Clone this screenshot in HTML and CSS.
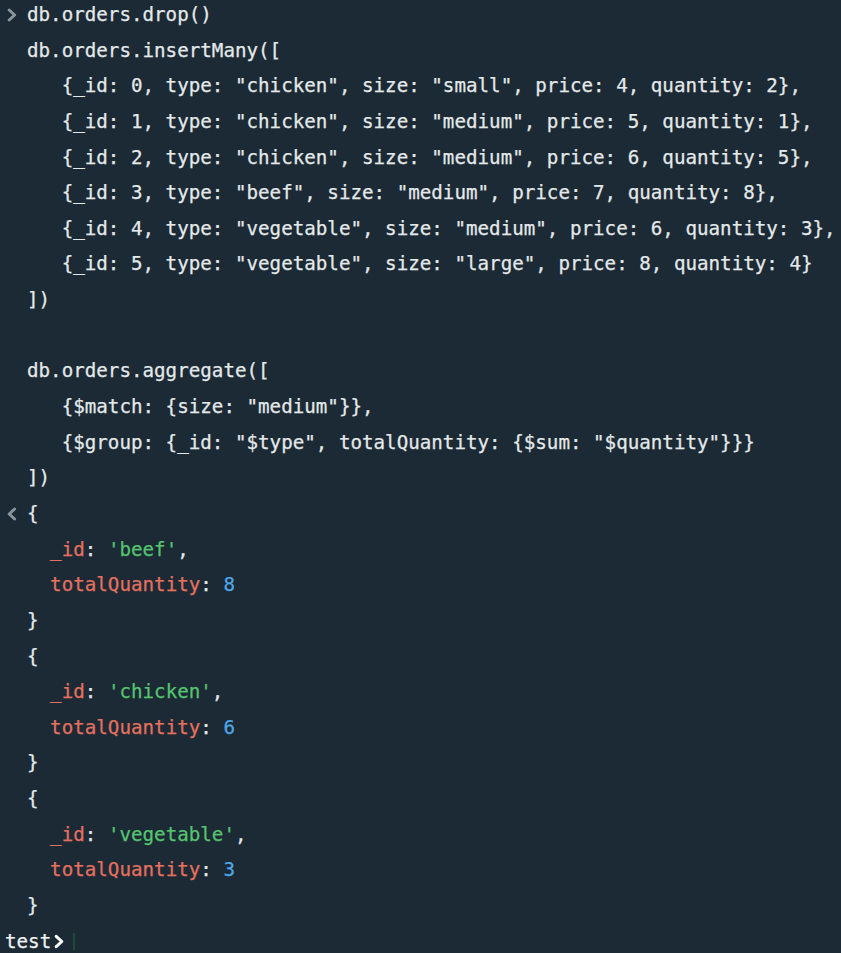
FILE: index.html
```html
<!DOCTYPE html>
<html>
<head>
<meta charset="utf-8">
<link rel="stylesheet" href="styles.css">
</head>
<body>
<div class="shell">
  <div class="entry">
    <span class="gutter"><svg class="chev" viewBox="0 0 10 14" width="10" height="14"><path d="M2.2 2 L7.6 7 L2.2 12" fill="none" stroke="currentColor" stroke-width="3" stroke-linecap="round" stroke-linejoin="round"/></svg></span>
    <div class="code">
      <div class="ln">db.orders.drop()</div>
      <div class="ln">db.orders.insertMany([</div>
      <div class="ln">   {_id: 0, type: "chicken", size: "small", price: 4, quantity: 2},</div>
      <div class="ln">   {_id: 1, type: "chicken", size: "medium", price: 5, quantity: 1},</div>
      <div class="ln">   {_id: 2, type: "chicken", size: "medium", price: 6, quantity: 5},</div>
      <div class="ln">   {_id: 3, type: "beef", size: "medium", price: 7, quantity: 8},</div>
      <div class="ln">   {_id: 4, type: "vegetable", size: "medium", price: 6, quantity: 3},</div>
      <div class="ln">   {_id: 5, type: "vegetable", size: "large", price: 8, quantity: 4}</div>
      <div class="ln">])</div>
      <div class="ln"> </div>
      <div class="ln">db.orders.aggregate([</div>
      <div class="ln">   {$match: {size: "medium"}},</div>
      <div class="ln">   {$group: {_id: "$type", totalQuantity: {$sum: "$quantity"}}}</div>
      <div class="ln">])</div>
    </div>
  </div>
  <div class="entry">
    <span class="gutter"><svg class="chev" viewBox="0 0 10 14" width="10" height="14"><path d="M7.6 2 L2.2 7 L7.6 12" fill="none" stroke="currentColor" stroke-width="3" stroke-linecap="round" stroke-linejoin="round"/></svg></span>
    <div class="code">
      <div class="ln">{</div>
      <div class="ln">  <span class="k">_id</span>: <span class="s">'beef'</span>,</div>
      <div class="ln">  <span class="k">totalQuantity</span>: <span class="n">8</span></div>
      <div class="ln">}</div>
      <div class="ln">{</div>
      <div class="ln">  <span class="k">_id</span>: <span class="s">'chicken'</span>,</div>
      <div class="ln">  <span class="k">totalQuantity</span>: <span class="n">6</span></div>
      <div class="ln">}</div>
      <div class="ln">{</div>
      <div class="ln">  <span class="k">_id</span>: <span class="s">'vegetable'</span>,</div>
      <div class="ln">  <span class="k">totalQuantity</span>: <span class="n">3</span></div>
      <div class="ln">}</div>
    </div>
  </div>
  <div class="prompt">
    <span class="db">test</span><svg class="pchev" viewBox="0 0 12 16" width="12" height="15"><path d="M3 2.5 L9 8 L3 13.5" fill="none" stroke="currentColor" stroke-width="3.2" stroke-linecap="round" stroke-linejoin="round"/></svg><span class="cursor"></span>
  </div>
</div>
</body>
</html>
```

FILE: styles.css
```css
html, body {
  margin: 0;
  padding: 0;
  background: #1c2a35;
  overflow: hidden;
}

.shell {
  margin-top: -3px;
  font-family: "DejaVu Sans Mono", "Liberation Mono", monospace;
  font-size: 19.2px;
  line-height: 35.65px;
  color: #e4e9ea;
  -webkit-text-stroke: 0.25px currentColor;
}

.entry {
  display: flex;
}

.gutter {
  width: 27px;
  flex: none;
  display: flex;
  align-items: center;
  padding-left: 7px;
  box-sizing: border-box;
  height: 35.65px;
  color: #8a959b;
}

.chev {
  display: block;
}

.ln {
  white-space: pre;
  height: 35.65px;
}

.k { color: #e4705f; }
.s { color: #56c46f; }
.n { color: #4fa7e6; }

.prompt {
  display: flex;
  align-items: center;
  height: 35.65px;
  padding-left: 5px;
}

.db {
  color: #eef2f2;
}

.pchev {
  display: block;
  margin-left: 2px;
  color: #ffffff;
}

.cursor {
  display: block;
  width: 2px;
  height: 17px;
  margin-left: 8px;
  background: #1f4a38;
}
```
